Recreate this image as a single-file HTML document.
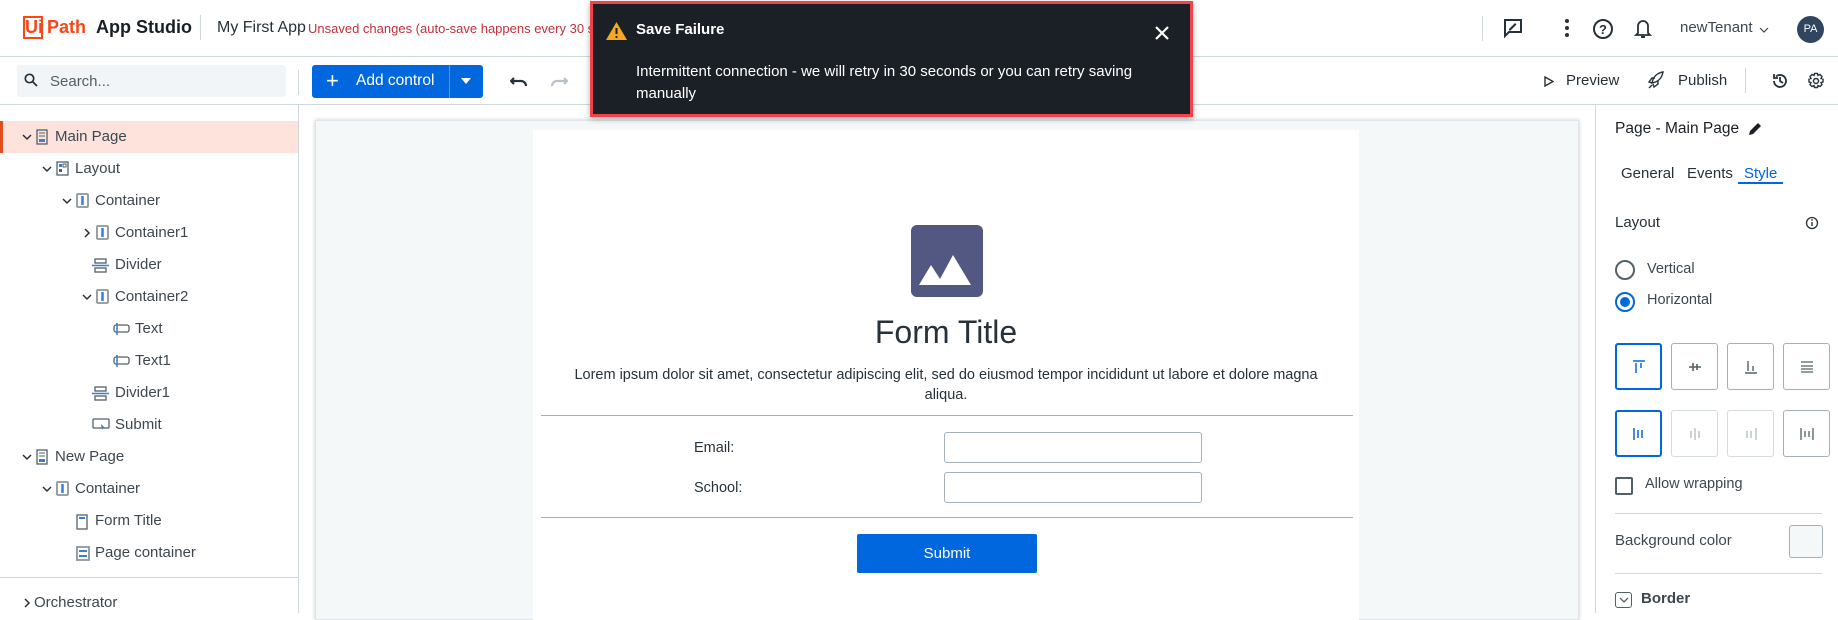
<!DOCTYPE html>
<html><head><meta charset="utf-8"><style>
*{box-sizing:border-box;margin:0;padding:0}
body{width:1838px;height:613px;overflow:hidden;background:#fff;font-family:"Liberation Sans",sans-serif;color:#273139;position:relative}
.a{position:absolute;white-space:nowrap}
.row{position:absolute;height:32px;line-height:32px;font-size:15px;color:#3d4750}
svg{position:absolute}
.btn{position:absolute;width:47px;height:47px;border:1px solid #a4b1b8;border-radius:3px;background:#fff}
.btn.sel{border:2px solid #0067df}
</style></head><body>
<!-- header -->
<div class="a" style="left:23px;top:16px;width:20px;height:23px;border:2px solid #fa4616"></div>
<div class="a" style="left:25px;top:16px;font-size:18px;line-height:23px;color:#fa4616;font-weight:bold">Ui<span style="margin-left:4px">Path</span></div>
<div class="a" style="left:96px;top:16px;font-size:18px;line-height:23px;font-weight:bold;color:#1a1f24">App Studio</div>
<div class="a" style="left:200px;top:15px;width:1px;height:25px;background:#cfd8dd"></div>
<div class="a" style="left:217px;top:19px;font-size:16px;color:#273139">My First App</div>
<div class="a" style="left:308px;top:21px;font-size:13px;color:#c0313a">Unsaved changes (auto-save happens every 30 s)</div>
<div class="a" style="left:1482px;top:16px;width:1px;height:25px;background:#cfd8dd"></div>
<svg style="left:1503px;top:18px" width="20" height="20" viewBox="0 0 20 20"><path d="M2 2h16v12H6l-4 4z" fill="none" stroke="#273139" stroke-width="2"/><path d="M6 11l6-6 1.5 1.5-6 6H6z M7 12h6" fill="#273139"/></svg>
<svg style="left:1563px;top:18px" width="8" height="20"><circle cx="4" cy="3" r="2" fill="#273139"/><circle cx="4" cy="10" r="2" fill="#273139"/><circle cx="4" cy="17" r="2" fill="#273139"/></svg>
<svg style="left:1592px;top:18px" width="22" height="22"><circle cx="11" cy="11" r="9" fill="none" stroke="#273139" stroke-width="2"/><text x="11" y="16" font-size="13" text-anchor="middle" fill="#273139" font-family="Liberation Sans" font-weight="bold">?</text></svg>
<svg style="left:1634px;top:17px" width="18" height="22"><path d="M4 16V9a5 5 0 0 1 10 0v7l2 2H2z" fill="none" stroke="#273139" stroke-width="1.8"/><path d="M7 20h4" stroke="#273139" stroke-width="2"/></svg>
<div class="a" style="left:1680px;top:19px;font-size:15px;color:#3d4750">newTenant</div>
<svg style="left:1759px;top:27px" width="10" height="6"><path d="M1 1l4 4 4-4" fill="none" stroke="#3d4750" stroke-width="1.2"/></svg>
<div class="a" style="left:1797px;top:16px;width:27px;height:27px;border-radius:50%;background:#2f4560;color:#fff;font-size:11px;text-align:center;line-height:27px">PA</div>
<div class="a" style="left:0;top:56px;width:1838px;height:1px;background:#cfd8dd"></div>
<!-- toolbar -->
<div class="a" style="left:17px;top:65px;width:269px;height:32px;background:#f1f5f7;border-radius:3px"></div>
<svg style="left:24px;top:73px" width="14" height="14"><circle cx="5.5" cy="5.5" r="4.2" fill="none" stroke="#273139" stroke-width="1.7"/><path d="M8.5 8.5l4.5 4.5" stroke="#273139" stroke-width="1.8"/></svg>
<div class="a" style="left:50px;top:73px;font-size:15px;color:#526069">Search...</div>
<div class="a" style="left:298px;top:70px;width:1px;height:25px;background:#cfd8dd"></div>
<div class="a" style="left:312px;top:65px;width:171px;height:33px;background:#0067df;border-radius:3px"></div>
<div class="a" style="left:449px;top:65px;width:1px;height:33px;background:#5a9cec"></div>
<div class="a" style="left:326px;top:68px;font-size:22px;color:#fff;line-height:26px">+</div>
<div class="a" style="left:356px;top:72px;font-size:15.5px;color:#fff">Add control</div>
<svg style="left:460px;top:77px" width="12" height="8"><path d="M1 1h10L6 7z" fill="#fff"/></svg>
<svg style="left:510px;top:75px" width="18" height="12"><path d="M4 3l-3 3 3 3M1 6h10a5 5 0 0 1 5 5" fill="none" stroke="#273139" stroke-width="2.2"/></svg>
<svg style="left:550px;top:75px" width="18" height="12"><path d="M14 3l3 3-3 3M17 6H7a5 5 0 0 0-5 5" fill="none" stroke="#b8c2c8" stroke-width="2.2"/></svg>
<svg style="left:1544px;top:76px" width="10" height="11"><path d="M1 1l8 4.5L1 10z" fill="none" stroke="#273139" stroke-width="1.4"/></svg>
<div class="a" style="left:1566px;top:72px;font-size:15px;color:#273139">Preview</div>
<svg style="left:1646px;top:71px" width="18" height="19"><path d="M6 12C7 6 11 2 17 1c-1 6-5 10-11 11z M6 12l-3-1 3-4 3 0 M7 13l1 3 4-3 0-3 M3 17l3-3" fill="none" stroke="#273139" stroke-width="1.4"/></svg>
<div class="a" style="left:1678px;top:72px;font-size:15px;color:#273139">Publish</div>
<div class="a" style="left:1745px;top:68px;width:1px;height:25px;background:#cfd8dd"></div>
<svg style="left:1771px;top:72px" width="18" height="18"><path d="M3 9a6 6 0 1 0 2-4.5M3 2v4h4M9 5v4l3 2" fill="none" stroke="#273139" stroke-width="1.8"/></svg>
<svg style="left:1807px;top:72px" width="18" height="18" viewBox="0 0 18 18"><circle cx="9" cy="9" r="2.5" fill="none" stroke="#273139" stroke-width="1.5"/><path d="M7.5 1.5h3l.5 2 2-1 2 2-1 2 2 .5v3l-2 .5 1 2-2 2-2-1-.5 2h-3l-.5-2-2 1-2-2 1-2-2-.5v-3l2-.5-1-2 2-2 2 1z" fill="none" stroke="#273139" stroke-width="1.4"/></svg>
<div class="a" style="left:0;top:104px;width:1838px;height:1px;background:#cfd8dd"></div>
<!-- left tree -->
<div class="a" style="left:0;top:121px;width:298px;height:32px;background:#fde3dc;border-left:3px solid #e0501e"></div>
<div class="a" style="left:298px;top:105px;width:1px;height:508px;background:#cfd8dd"></div>
<div class="a" style="left:0;top:577px;width:298px;height:1px;background:#cfd8dd"></div>
<svg style="left:22px;top:134px" width="10" height="7"><path d="M1 1l4 4 4-4" fill="none" stroke="#273139" stroke-width="1.5"/></svg><div class="row" style="left:55px;top:121px">Main Page</div>
<svg style="left:42px;top:166px" width="10" height="7"><path d="M1 1l4 4 4-4" fill="none" stroke="#273139" stroke-width="1.5"/></svg><div class="row" style="left:75px;top:153px">Layout</div>
<svg style="left:62px;top:198px" width="10" height="7"><path d="M1 1l4 4 4-4" fill="none" stroke="#273139" stroke-width="1.5"/></svg><div class="row" style="left:95px;top:185px">Container</div>
<svg style="left:84px;top:228px" width="7" height="10"><path d="M1 1l4 4-4 4" fill="none" stroke="#273139" stroke-width="1.5"/></svg><div class="row" style="left:115px;top:217px">Container1</div>
<div class="row" style="left:115px;top:249px">Divider</div>
<svg style="left:82px;top:294px" width="10" height="7"><path d="M1 1l4 4 4-4" fill="none" stroke="#273139" stroke-width="1.5"/></svg><div class="row" style="left:115px;top:281px">Container2</div>
<div class="row" style="left:135px;top:313px">Text</div>
<div class="row" style="left:135px;top:345px">Text1</div>
<div class="row" style="left:115px;top:377px">Divider1</div>
<div class="row" style="left:115px;top:409px">Submit</div>
<svg style="left:22px;top:454px" width="10" height="7"><path d="M1 1l4 4 4-4" fill="none" stroke="#273139" stroke-width="1.5"/></svg><div class="row" style="left:55px;top:441px">New Page</div>
<svg style="left:42px;top:486px" width="10" height="7"><path d="M1 1l4 4 4-4" fill="none" stroke="#273139" stroke-width="1.5"/></svg><div class="row" style="left:75px;top:473px">Container</div>
<div class="row" style="left:95px;top:505px">Form Title</div>
<div class="row" style="left:95px;top:537px">Page container</div>
<svg style="left:24px;top:598px" width="7" height="10"><path d="M1 1l4 4-4 4" fill="none" stroke="#273139" stroke-width="1.5"/></svg><div class="row" style="left:34px;top:587px">Orchestrator</div>
<!-- tree icons -->
<svg style="left:36px;top:129px" width="12" height="16"><rect x="1" y="1" width="10" height="14" fill="none" stroke="#526069" stroke-width="1.3"/><rect x="3" y="10" width="6" height="3" fill="#3a7fd5"/><path d="M3 4h6M3 7h6" stroke="#526069"/></svg>
<svg style="left:36px;top:449px" width="12" height="16"><rect x="1" y="1" width="10" height="14" fill="none" stroke="#526069" stroke-width="1.3"/><rect x="3" y="10" width="6" height="3" fill="#3a7fd5"/><path d="M3 4h6M3 7h6" stroke="#526069"/></svg>
<svg style="left:56px;top:161px" width="13" height="15"><rect x="1" y="1" width="11" height="13" fill="none" stroke="#526069" stroke-width="1.3"/><rect x="3" y="3" width="3" height="3" fill="#3a7fd5"/><rect x="7" y="3" width="3" height="3" fill="none" stroke="#526069"/><rect x="3" y="8" width="3" height="3" fill="#526069"/></svg>
<svg style="left:76px;top:193px" width="13" height="15"><rect x="1" y="1" width="11" height="13" rx="1" fill="none" stroke="#8a959c" stroke-width="1.8"/><path d="M6.5 3v9" stroke="#3a7fd5" stroke-width="2.5"/></svg>
<svg style="left:96px;top:225px" width="13" height="15"><rect x="1" y="1" width="11" height="13" rx="1" fill="none" stroke="#8a959c" stroke-width="1.8"/><path d="M6.5 3v9" stroke="#3a7fd5" stroke-width="2.5"/></svg>
<svg style="left:96px;top:289px" width="13" height="15"><rect x="1" y="1" width="11" height="13" rx="1" fill="none" stroke="#8a959c" stroke-width="1.8"/><path d="M6.5 3v9" stroke="#3a7fd5" stroke-width="2.5"/></svg>
<svg style="left:56px;top:481px" width="13" height="15"><rect x="1" y="1" width="11" height="13" rx="1" fill="none" stroke="#8a959c" stroke-width="1.8"/><path d="M6.5 3v9" stroke="#3a7fd5" stroke-width="2.5"/></svg>
<svg style="left:92px;top:258px" width="17" height="15"><rect x="3" y="1" width="11" height="4" fill="none" stroke="#526069" stroke-width="1.3"/><path d="M0 7.5h17" stroke="#3a7fd5" stroke-width="1.6"/><rect x="3" y="10" width="11" height="4" fill="none" stroke="#526069" stroke-width="1.3"/></svg>
<svg style="left:92px;top:386px" width="17" height="15"><rect x="3" y="1" width="11" height="4" fill="none" stroke="#526069" stroke-width="1.3"/><path d="M0 7.5h17" stroke="#3a7fd5" stroke-width="1.6"/><rect x="3" y="10" width="11" height="4" fill="none" stroke="#526069" stroke-width="1.3"/></svg>
<svg style="left:112px;top:322px" width="18" height="14"><rect x="2" y="3" width="15" height="7" rx="2" fill="none" stroke="#526069" stroke-width="1.3"/><path d="M5 1v12" stroke="#3a7fd5" stroke-width="1.6"/></svg>
<svg style="left:112px;top:354px" width="18" height="14"><rect x="2" y="3" width="15" height="7" rx="2" fill="none" stroke="#526069" stroke-width="1.3"/><path d="M5 1v12" stroke="#3a7fd5" stroke-width="1.6"/></svg>
<svg style="left:92px;top:418px" width="18" height="14"><rect x="1" y="1" width="16" height="9" rx="1" fill="none" stroke="#526069" stroke-width="1.3"/><path d="M9 6l4 4-2 0-1 2z" fill="#3a7fd5"/></svg>
<svg style="left:76px;top:514px" width="12" height="16"><rect x="1" y="1" width="10" height="14" fill="none" stroke="#526069" stroke-width="1.3"/><path d="M3 4h6" stroke="#3a7fd5" stroke-width="2"/></svg>
<svg style="left:76px;top:546px" width="14" height="15"><rect x="1" y="1" width="12" height="13" fill="#fff" stroke="#8a959c" stroke-width="1.8"/><path d="M3 5h8M3 10h8" stroke="#3a7fd5" stroke-width="2"/></svg>
<!-- canvas -->
<div class="a" style="left:299px;top:105px;width:1297px;height:508px;background:#fff"></div>
<div class="a" style="left:315px;top:120px;width:1264px;height:500px;background:#f4f8f9;border:1px solid #dfe5e8;box-shadow:0 0 4px rgba(0,0,0,.2)"></div>
<div class="a" style="left:533px;top:130px;width:826px;height:490px;background:#fff"></div>
<div class="a" style="left:911px;top:225px;width:72px;height:72px;background:#535883;border-radius:6px"></div>
<svg style="left:911px;top:225px" width="72" height="72"><path d="M8 60l12-20 9 14 13-24 18 30z" fill="#fff"/></svg>
<div class="a" style="left:533px;top:314px;width:826px;text-align:center;font-size:32px;color:#273139">Form Title</div>
<div class="a" style="left:553px;top:365px;width:786px;text-align:center;font-size:14.5px;color:#273139;white-space:normal;line-height:20px">Lorem ipsum dolor sit amet, consectetur adipiscing elit, sed do eiusmod tempor incididunt ut labore et dolore magna aliqua.</div>
<div class="a" style="left:541px;top:415px;width:812px;height:1px;background:#a4b1b8"></div>
<div class="a" style="left:694px;top:440px;font-size:14.5px;color:#273139">Email:</div>
<div class="a" style="left:694px;top:480px;font-size:14.5px;color:#273139">School:</div>
<div class="a" style="left:944px;top:432px;width:258px;height:31px;border:1px solid #a4b1b8;border-radius:3px"></div>
<div class="a" style="left:944px;top:472px;width:258px;height:31px;border:1px solid #a4b1b8;border-radius:3px"></div>
<div class="a" style="left:541px;top:517px;width:812px;height:1px;background:#a4b1b8"></div>
<div class="a" style="left:857px;top:534px;width:180px;height:39px;background:#0067df;border-radius:2px;color:#fff;font-size:15px;text-align:center;line-height:39px">Submit</div>
<!-- right panel -->
<div class="a" style="left:1595px;top:105px;width:1px;height:508px;background:#cfd8dd"></div>
<div class="a" style="left:1615px;top:120px;font-size:15.5px;color:#1a1f24">Page - Main Page</div>
<svg style="left:1747px;top:121px" width="16" height="16"><path d="M2 14l1-4 8-8 3 3-8 8z" fill="#1a1f24"/></svg>
<div class="a" style="left:1621px;top:165px;font-size:15px;color:#273139">General</div>
<div class="a" style="left:1687px;top:165px;font-size:15px;color:#273139">Events</div>
<div class="a" style="left:1744px;top:165px;font-size:15px;color:#0067df">Style</div>
<div class="a" style="left:1738px;top:182px;width:45px;height:2px;background:#0067df"></div>
<div class="a" style="left:1615px;top:214px;font-size:15px;color:#273139">Layout</div>
<svg style="left:1805px;top:216px" width="14" height="14"><circle cx="7" cy="7" r="5.5" fill="none" stroke="#273139" stroke-width="1.3"/><path d="M7 6v4" stroke="#273139" stroke-width="1.4"/><circle cx="7" cy="4" r=".9" fill="#273139"/></svg>
<div class="a" style="left:1615px;top:260px;width:20px;height:20px;border:2px solid #526069;border-radius:50%"></div>
<div class="a" style="left:1647px;top:261px;font-size:14.5px;color:#3d4750">Vertical</div>
<div class="a" style="left:1615px;top:292px;width:20px;height:20px;border:2px solid #0067df;border-radius:50%"></div>
<div class="a" style="left:1620px;top:297px;width:10px;height:10px;background:#0067df;border-radius:50%"></div>
<div class="a" style="left:1647px;top:292px;font-size:14.5px;color:#3d4750">Horizontal</div>
<div class="btn sel" style="left:1615px;top:343px"></div>
<div class="btn" style="left:1671px;top:343px"></div>
<div class="btn" style="left:1727px;top:343px"></div>
<div class="btn" style="left:1783px;top:343px"></div>
<div class="btn sel" style="left:1615px;top:410px"></div>
<div class="btn" style="left:1671px;top:410px;border-color:#d5dde1"></div>
<div class="btn" style="left:1727px;top:410px;border-color:#d5dde1"></div>
<div class="btn" style="left:1783px;top:410px"></div>
<svg style="left:1632px;top:360px" width="14" height="14"><path d="M1 1h12M4 3v10M9 3v5" stroke="#0067df" stroke-width="1.5"/></svg>
<svg style="left:1688px;top:360px" width="14" height="14"><path d="M1 7h12M5 3v8M9 4v6" stroke="#526069" stroke-width="1.6"/></svg>
<svg style="left:1744px;top:360px" width="14" height="14"><path d="M1 13h12M4 1v10M9 6v5" stroke="#526069" stroke-width="1.4"/></svg>
<svg style="left:1800px;top:360px" width="14" height="14"><path d="M1 2h12M1 6h12M1 9h12M1 12h12" stroke="#526069" stroke-width="1.3"/></svg>
<svg style="left:1632px;top:427px" width="14" height="14"><path d="M2 1v12M6 3v8M10 3v8" stroke="#0067df" stroke-width="1.5"/></svg>
<svg style="left:1688px;top:427px" width="14" height="14"><path d="M3 4v7M7 1v12M11 4v7" stroke="#b0bbc1" stroke-width="1.3"/></svg>
<svg style="left:1744px;top:427px" width="14" height="14"><path d="M3 4v7M7 4v7M12 1v12" stroke="#b0bbc1" stroke-width="1.3"/></svg>
<svg style="left:1800px;top:427px" width="14" height="14"><path d="M1 1v12M5 4v6M9 4v6M13 1v12" stroke="#526069" stroke-width="1.3"/></svg>
<div class="a" style="left:1615px;top:477px;width:18px;height:18px;border:2px solid #526069;border-radius:2px"></div>
<div class="a" style="left:1645px;top:476px;font-size:14.5px;color:#3d4750">Allow wrapping</div>
<div class="a" style="left:1615px;top:513px;width:207px;height:1px;background:#cfd8dd"></div>
<div class="a" style="left:1615px;top:532px;font-size:15px;color:#3d4750">Background color</div>
<div class="a" style="left:1789px;top:525px;width:34px;height:33px;background:#f4f8f9;border:1px solid #a4b1b8;border-radius:3px"></div>
<div class="a" style="left:1615px;top:573px;width:207px;height:1px;background:#cfd8dd"></div>
<div class="a" style="left:1615px;top:592px;width:17px;height:16px;border:1.3px solid #526069;border-radius:3px"></div>
<svg style="left:1619px;top:597px" width="10" height="6"><path d="M1 1l4 4 4-4" fill="none" stroke="#526069" stroke-width="1.3"/></svg>
<div class="a" style="left:1641px;top:590px;font-size:15px;font-weight:bold;color:#3d4750">Border</div>
<!-- toast -->
<div class="a" style="left:590px;top:1px;width:603px;height:116px;background:#1b2027;border:3px solid #f0434b;box-shadow:0 2px 6px rgba(0,0,0,.3)"></div>
<svg style="left:605px;top:21px" width="23" height="20"><path d="M11.5 1L22 19H1z" fill="#f5a623"/><path d="M11.5 7v6" stroke="#1b2027" stroke-width="2"/><circle cx="11.5" cy="16" r="1.1" fill="#1b2027"/></svg>
<div class="a" style="left:636px;top:21px;font-size:15px;font-weight:bold;color:#fff">Save Failure</div>
<svg style="left:1155px;top:26px" width="14" height="14"><path d="M1 1l12 12M13 1L1 13" stroke="#fff" stroke-width="2.2"/></svg>
<div class="a" style="left:636px;top:63px;font-size:15px;color:#fff">Intermittent connection - we will retry in 30 seconds or you can retry saving</div>
<div class="a" style="left:636px;top:85px;font-size:15px;color:#fff">manually</div>
</body></html>
